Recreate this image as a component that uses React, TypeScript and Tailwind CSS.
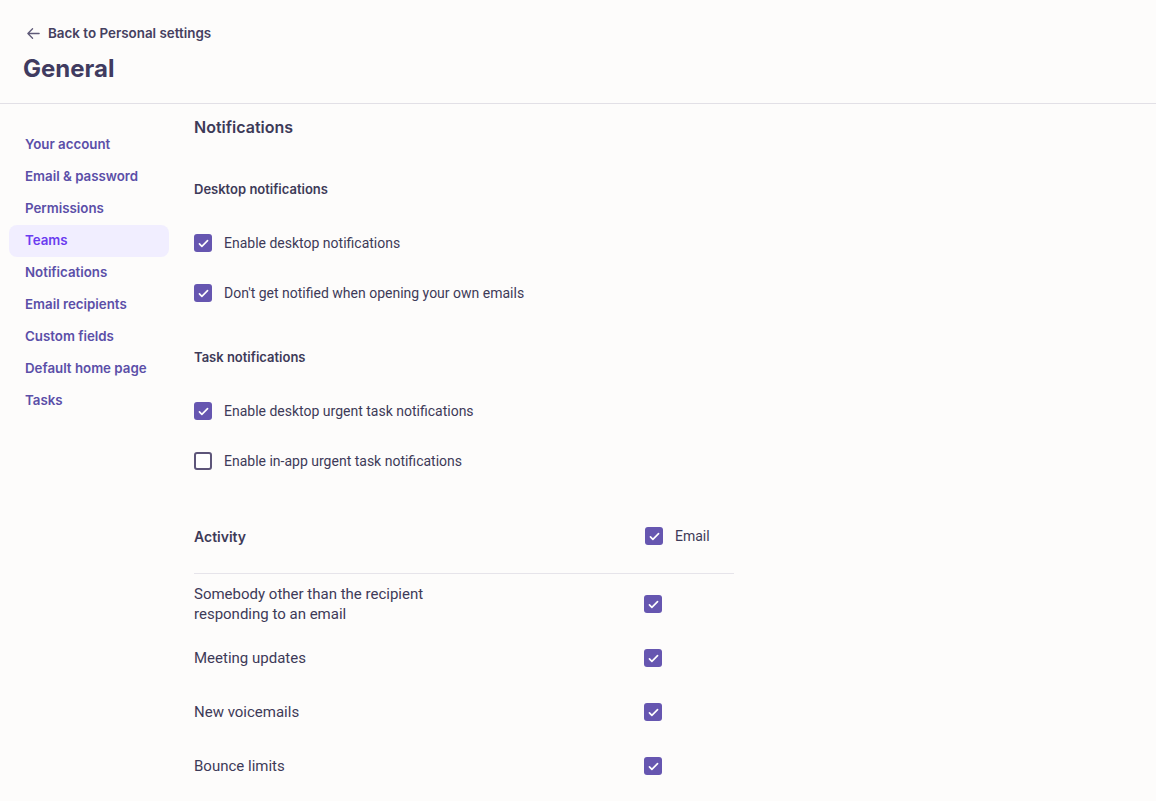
import React from 'react';

const nav = ['Your account', 'Email & password', 'Permissions', 'Teams', 'Notifications', 'Email recipients', 'Custom fields', 'Default home page', 'Tasks'];

const Box = ({ checked }: { checked: boolean }) =>
  checked ? (
    <span className="flex h-[18px] w-[18px] shrink-0 items-center justify-center rounded-[3px] bg-[#6656b0]">
      <svg viewBox="0 0 16 16" className="h-[13px] w-[13px]" fill="none" stroke="white" strokeWidth="2" strokeLinecap="round" strokeLinejoin="round">
        <path d="M3 8.5l3 3 7-7" />
      </svg>
    </span>
  ) : (
    <span className="h-[18px] w-[18px] shrink-0 rounded-[3px] border-2 border-[#5d5579] bg-white" />
  );

const CheckRow = ({ label, checked }: { label: string; checked: boolean }) => (
  <div className="flex h-[50px] items-center gap-3">
    <Box checked={checked} />
    <span className="text-[14px] text-[#3d3a58]">{label}</span>
  </div>
);

export default function App() {
  const activity = [
    ['Somebody other than the recipient', 'responding to an email'],
    ['Meeting updates'],
    ['New voicemails'],
    ['Bounce limits'],
  ];
  return (
    <div className="min-h-[801px] bg-[#fdfcfb] text-[#3d3a58] font-['Roboto',sans-serif]">
      {/* HEADER */}
      <div className="border-b border-[#e2e0e6] px-[23px] pt-[23px] pb-[19px] font-['Inter',sans-serif]">
        <div className="flex items-center gap-[7px] pl-[3px] text-[13.4px] font-semibold text-[#45405f]">
          <svg viewBox="0 0 16 16" className="h-[15px] w-[15px]" fill="none" stroke="#5f5a78" strokeWidth="1.4" strokeLinecap="round" strokeLinejoin="round">
            <path d="M14 8H2M7 3L2 8l5 5" />
          </svg>
          Back to Personal settings
        </div>
        <h1 className="mt-[10px] text-[24px] leading-[31px] font-bold text-[#403b60]">General</h1>
      </div>

      <div className="flex">
        {/* SIDEBAR */}
        <nav className="w-[185px] shrink-0 pl-[9px] pt-[25px] font-['Inter',sans-serif]">
          {nav.map((n) => (
            <div
              key={n}
              className={`flex h-[32px] w-[160px] items-center rounded-lg px-4 text-[13.3px] font-semibold ${n === 'Teams' ? 'bg-[#f1eeff] text-[#6b3cf0]' : 'text-[#5b4fa8]'}`}
            >
              {n}
            </div>
          ))}
        </nav>

        {/* CONTENT */}
        <main className="w-[549px] pl-[9px] pt-[13px]">
          <h2 className="text-[16px] leading-[20px] font-semibold text-[#3d3a58] font-['Inter',sans-serif]">Notifications</h2>

          <h3 className="mt-[43px] text-[13px] leading-[18px] font-semibold font-['Inter',sans-serif]">Desktop notifications</h3>
          <div className="mt-[20px]">
            <CheckRow checked label="Enable desktop notifications" />
            <CheckRow checked label="Don't get notified when opening your own emails" />
          </div>

          <h3 className="mt-[30px] text-[13px] leading-[18px] font-semibold font-['Inter',sans-serif]">Task notifications</h3>
          <div className="mt-[20px]">
            <CheckRow checked label="Enable desktop urgent task notifications" />
            <CheckRow checked={false} label="Enable in-app urgent task notifications" />
          </div>

          <div className="mt-[13px] flex h-[75px] items-center border-b border-[#e6e4ea]">
            <span className="flex-1 text-[14px] font-semibold font-['Inter',sans-serif]">Activity</span>
            <div className="flex w-[89px] items-center gap-3">
              <Box checked />
              <span className="text-[14px]">Email</span>
            </div>
          </div>
          {activity.map((lines, i) => (
            <div key={i} className={`flex items-center ${i === 0 ? 'h-[57px] pt-[3px]' : 'h-[54px]'}`}>
              <span className="flex-1 text-[15px] leading-[20px] text-[#3d3a58]">
                {lines.map((l) => (
                  <div key={l}>{l}</div>
                ))}
              </span>
              <div className="w-[90px]">
                <Box checked />
              </div>
            </div>
          ))}
        </main>
      </div>
    </div>
  );
}
